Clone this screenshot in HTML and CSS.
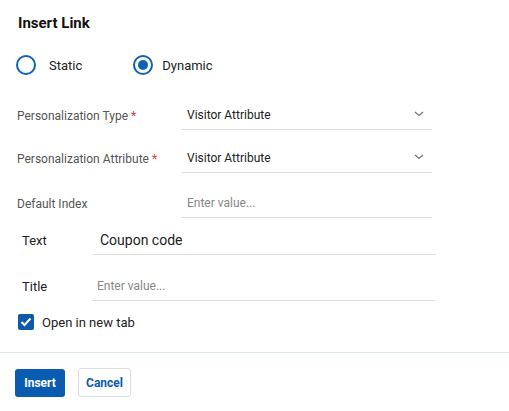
FILE: index.html
```html
<!DOCTYPE html>
<html>
<head>
<meta charset="utf-8">
<link rel="stylesheet" href="styles.css">
</head>
<body>
<div class="dialog">
  <h2 class="title">Insert Link</h2>
  <div class="radios">
    <label class="radio"><span class="ring"></span><span>Static</span></label>
    <label class="radio checked"><span class="ring"><span class="dot"></span></span><span>Dynamic</span></label>
  </div>
  <div class="grid">
    <div class="row">
      <div class="lbl">Personalization Type <span class="req">*</span></div>
      <div class="field select"><span>Visitor Attribute</span>
        <svg width="10" height="6" viewBox="0 0 10 6"><path d="M1 1l4 3.5L9 1" fill="none" stroke="#777" stroke-width="1.3"/></svg>
      </div>
    </div>
    <div class="row">
      <div class="lbl">Personalization Attribute <span class="req">*</span></div>
      <div class="field select"><span>Visitor Attribute</span>
        <svg width="10" height="6" viewBox="0 0 10 6"><path d="M1 1l4 3.5L9 1" fill="none" stroke="#777" stroke-width="1.3"/></svg>
      </div>
    </div>
    <div class="row">
      <div class="lbl">Default Index</div>
      <div class="field"><span class="ph">Enter value...</span></div>
    </div>
  </div>
  <div class="row2 text-row">
    <div class="lbl2">Text</div>
    <div class="field2 wide"><span class="val">Coupon code</span></div>
  </div>
  <div class="row2 title-row">
    <div class="lbl2">Title</div>
    <div class="field2"><span class="ph">Enter value...</span></div>
  </div>
  <label class="check">
    <span class="box"><svg width="12" height="10" viewBox="0 0 12 10"><path d="M1.5 5l3 3L10.5 1.5" fill="none" stroke="#fff" stroke-width="2"/></svg></span>
    <span>Open in new tab</span>
  </label>
  <div class="footer">
    <button class="btn primary">Insert</button>
    <button class="btn secondary">Cancel</button>
  </div>
</div>
</body>
</html>
```
FILE: styles.css
```css
* { box-sizing: border-box; }
html, body { margin: 0; padding: 0; background: #fff; }
body { font-family: Roboto, "Liberation Sans", sans-serif; color: #222; }
.dialog { width: 509px; height: 411px; background: #fff; }
.title { margin: 0; padding: 14px 0 0 18px; font-size: 15px; font-weight: 700; line-height: 18px; color: #111; }
.radios { display: flex; padding: 23px 0 0 16px; }
.radio { display: flex; align-items: center; font-size: 13px; color: #222; height: 20px; }
.radio + .radio { margin-left: 51px; }
.ring { width: 20px; height: 20px; border: 2.5px solid #0f62b5; border-radius: 50%; display: flex; align-items: center; justify-content: center; margin-right: 13px; }
.checked .ring { margin-right: 9px; }
.dot { width: 10px; height: 10px; border-radius: 50%; background: #0f62b5; }
.grid { padding: 26px 0 0 17px; }
.row { display: flex; align-items: center; height: 29px; }
.row + .row { margin-top: 14px; }
.row:last-child { margin-top: 16px; }
.lbl { width: 165px; font-size: 12px; color: #555; }
.req { color: #e53935; }
.field { width: 250px; height: 29px; border-bottom: 1px solid #ddd; display: flex; align-items: center; justify-content: space-between; padding: 0 8px 1px 5px; font-size: 12px; color: #222; }
.field svg { margin-top: -1px; }
.ph { color: #888; font-size: 12px; }
.row2 { display: flex; align-items: center; padding-left: 22px; }
.text-row { margin-top: 8px; height: 29px; }
.title-row { margin-top: 17px; height: 29px; }
.lbl2 { width: 71px; font-size: 13px; color: #222; }
.title-row .lbl2 { width: 70px; }
.field2 { width: 343px; height: 29px; border-bottom: 1px solid #ddd; display: flex; align-items: center; padding-left: 5px; }
.field2.wide { padding-left: 7px; }
.val { font-size: 14px; color: #222; }
.title-row .ph { font-size: 12px; }
.check { display: flex; align-items: center; padding: 13px 0 0 18px; font-size: 13px; color: #222; }
.box { width: 16px; height: 16px; background: #0f5aa8; border-radius: 2px; display: flex; align-items: center; justify-content: center; margin-right: 8px; }
.footer { margin-top: 22px; border-top: 1px solid #dde9eb; padding: 15px 0 0 15px; display: flex; align-items: center; }
.btn { font-family: Roboto, "Liberation Sans", sans-serif; font-size: 12px; font-weight: 700; border-radius: 3px; cursor: pointer; }
.primary { width: 50px; height: 28px; background: #0a5cb0; color: #fff; border: none; }
.secondary { width: 53px; height: 29px; margin-left: 13px; background: #fff; color: #0a5cb0; border: 1px solid #ddd; }
```
